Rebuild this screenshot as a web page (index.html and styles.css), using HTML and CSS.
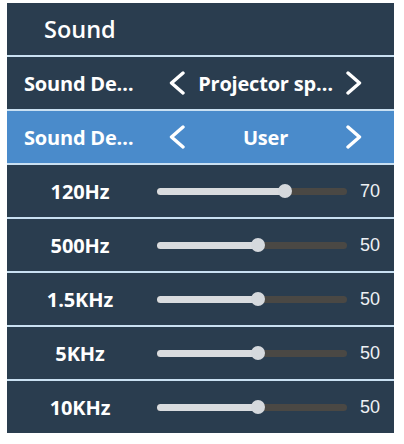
FILE: index.html
```html
<!DOCTYPE html>
<html>
<head>
<meta charset="utf-8">
<link rel="stylesheet" href="styles.css">
</head>
<body>
<div class="panel">
  <div class="row title">Sound</div>
  <div class="row select">
    <span class="label">Sound De…</span>
    <div class="picker">
      <svg class="chev" viewBox="0 0 16 24"><path d="M14 2 L2.5 12 L14 22"/></svg>
      <span class="value">Projector sp…</span>
      <svg class="chev" viewBox="0 0 16 24"><path d="M2 2 L13.5 12 L2 22"/></svg>
    </div>
  </div>
  <div class="row select active">
    <span class="label">Sound De…</span>
    <div class="picker">
      <svg class="chev" viewBox="0 0 16 24"><path d="M14 2 L2.5 12 L14 22"/></svg>
      <span class="value">User</span>
      <svg class="chev" viewBox="0 0 16 24"><path d="M2 2 L13.5 12 L2 22"/></svg>
    </div>
  </div>
  <div class="row eq">
    <span class="freq">120Hz</span>
    <div class="track"><div class="fill" style="width:128px"><span class="knob"></span></div></div>
    <span class="num">70</span>
  </div>
  <div class="row eq">
    <span class="freq">500Hz</span>
    <div class="track"><div class="fill" style="width:101px"><span class="knob"></span></div></div>
    <span class="num">50</span>
  </div>
  <div class="row eq">
    <span class="freq">1.5KHz</span>
    <div class="track"><div class="fill" style="width:101px"><span class="knob"></span></div></div>
    <span class="num">50</span>
  </div>
  <div class="row eq">
    <span class="freq">5KHz</span>
    <div class="track"><div class="fill" style="width:101px"><span class="knob"></span></div></div>
    <span class="num">50</span>
  </div>
  <div class="row eq">
    <span class="freq">10KHz</span>
    <div class="track"><div class="fill" style="width:101px"><span class="knob"></span></div></div>
    <span class="num">50</span>
  </div>
</div>
</body>
</html>
```

FILE: styles.css
```css
html, body {
  margin: 0;
  padding: 0;
  background: #ffffff;
}
body {
  font-family: "Open Sans", Lato, sans-serif;
  color: #ffffff;
}
.panel {
  margin: 3px 0 0 7px;
  width: 387px;
  display: flex;
  flex-direction: column;
  gap: 2px;
  background: #c9e0f2;
}
.row {
  height: 52px;
  background: #2a3d4f;
  display: flex;
  align-items: center;
}
.title {
  padding-left: 37px;
  font-size: 23.5px;
  font-weight: 600;
}
.select.active {
  background: #4a8bcb;
}
.label {
  width: 129px;
  padding-left: 17px;
  font-size: 20px;
  font-weight: 700;
  white-space: nowrap;
  letter-spacing: -0.2px;
}
.picker {
  flex: 1;
  display: flex;
  align-items: center;
  padding-left: 16px;
  padding-right: 32px;
}
.chev {
  width: 16px;
  height: 24px;
  flex: none;
}
.chev path {
  fill: none;
  stroke: #ffffff;
  stroke-width: 3.4;
  stroke-linecap: round;
  stroke-linejoin: round;
}
.value {
  flex: 1;
  text-align: center;
  font-size: 20px;
  font-weight: 700;
  white-space: nowrap;
  letter-spacing: -0.2px;
}
.freq {
  width: 146px;
  text-align: center;
  font-size: 20px;
  font-weight: 700;
  letter-spacing: -0.1px;
}
.track {
  margin-left: 4px;
  width: 190px;
  height: 7px;
  border-radius: 4px;
  background: #4a4844;
  display: flex;
}
.fill {
  height: 7px;
  border-radius: 4px;
  background: #d9dcdf;
  position: relative;
}
.knob {
  position: absolute;
  right: -7px;
  top: -3.5px;
  width: 14px;
  height: 14px;
  border-radius: 50%;
  background: #d5d9dd;
}
.num {
  margin-left: 13px;
  font-family: "Liberation Sans", Arial, sans-serif;
  font-size: 18px;
  color: #eef1f4;
}
```
